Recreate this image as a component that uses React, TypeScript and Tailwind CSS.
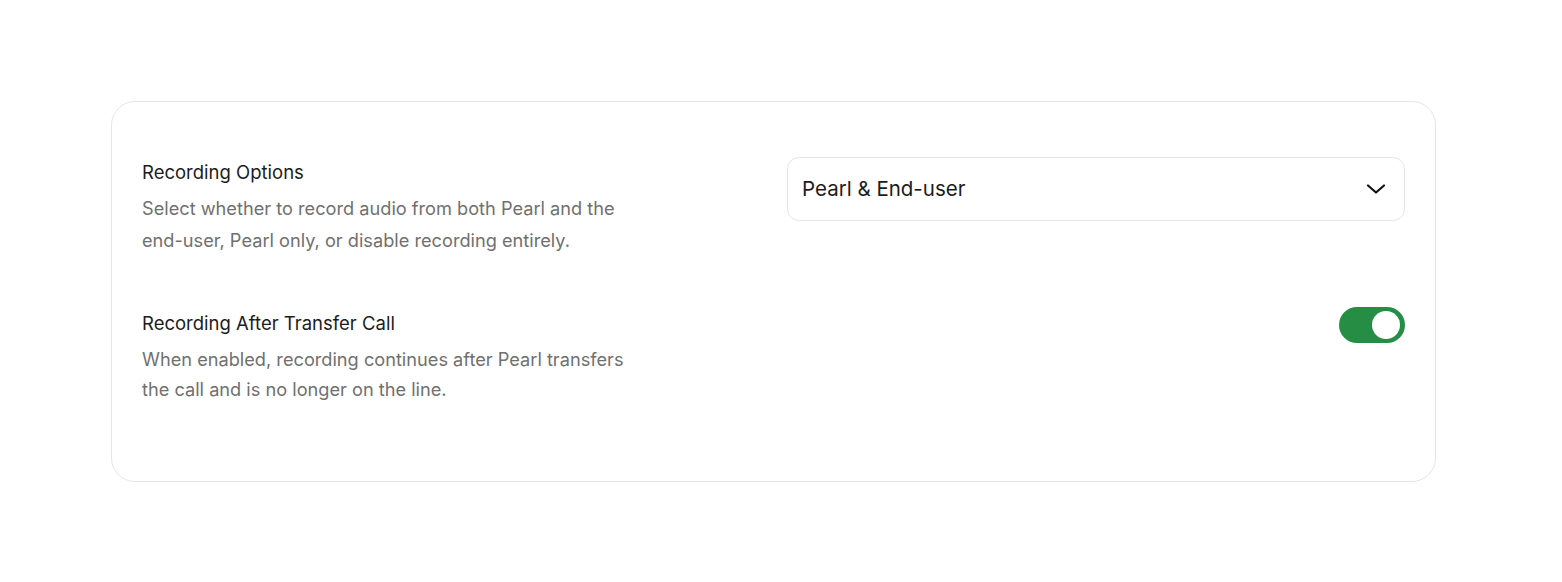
import React from "react";

export default function App() {
  return (
    <div className="min-h-[582px] w-full bg-white pt-[101px] pl-[111px]" style={{ fontFamily: "Inter, 'Noto Sans', sans-serif" }}>
      <div className="w-[1325px] h-[381px] rounded-[24px] border border-[#e6e6e6] px-[30px] pt-[55px]">
        <div className="flex items-start justify-between">
          <div className="flex flex-col">
            <div className="text-[18.5px] leading-[30px] text-[#1c1c1c]">Recording Options</div>
            <div className="mt-[5px] max-w-[498px] text-[18.2px] leading-[32px] text-[#707070]">
              Select whether to record audio from both Pearl and the end-user, Pearl only, or disable recording entirely.
            </div>
          </div>
          <div className="w-[618px]">
            <div className="flex h-[64px] items-center justify-between rounded-[12px] border border-[#e6e6e6] pl-[14px] pr-[16px]">
              <span className="text-[20.5px] text-[#1c1c1c]">Pearl &amp; End-user</span>
              <svg width="24" height="24" viewBox="0 0 24 24" fill="none" stroke="#111" strokeWidth="2.2" strokeLinecap="round" strokeLinejoin="round">
                <path d="M4 8.5l8 7 8-7" />
              </svg>
            </div>
          </div>
        </div>
        <div className="mt-[52px] flex items-start justify-between">
          <div className="flex flex-col">
            <div className="text-[18.5px] leading-[30px] text-[#1c1c1c]">Recording After Transfer Call</div>
            <div className="mt-[6px] max-w-[498px] text-[18.2px] leading-[30px] text-[#707070]">
              When enabled, recording continues after Pearl transfers the call and is no longer on the line.
            </div>
          </div>
          <div className="mt-[-1px] flex h-[36px] w-[66px] items-center justify-end rounded-full bg-[#268e44] pr-[5px]">
            <div className="h-[28px] w-[28px] rounded-full bg-white" />
          </div>
        </div>
      </div>
    </div>
  );
}
